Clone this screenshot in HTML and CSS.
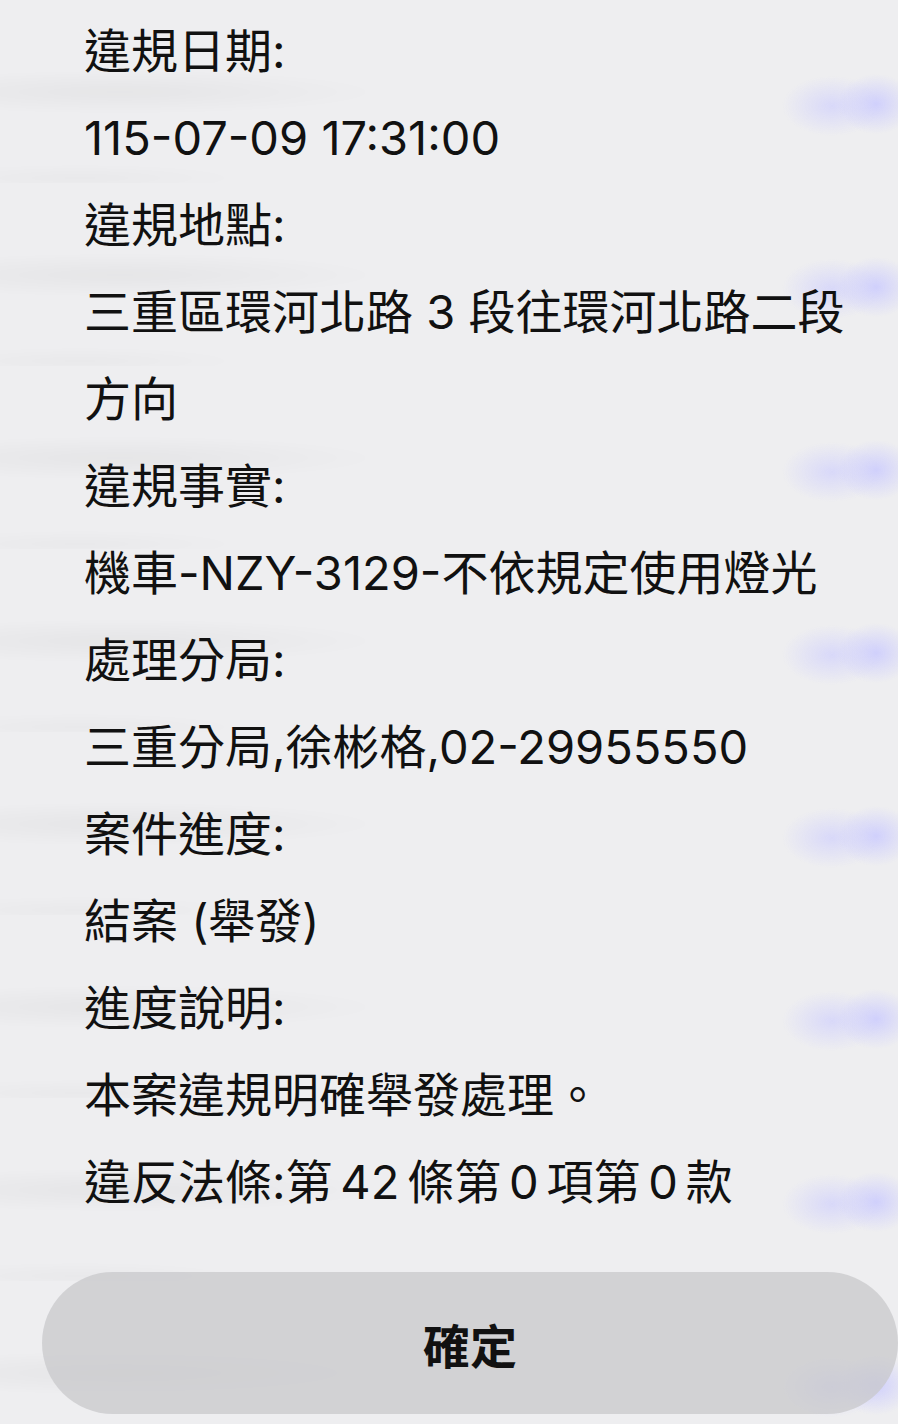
FILE: index.html
```html
<!DOCTYPE html>
<html lang="zh-Hant">
<head>
    <meta charset="UTF-8">
    <meta name="viewport" content="width=device-width, initial-scale=1.0">
    <title>違規查詢結果</title>

    <link rel="stylesheet" href="styles.css">
</head>
<body>
    <div class="alert" role="alertdialog" aria-label="違規查詢結果">
        <div class="message">
            <p>違規日期:</p>
            <p>115-07-09 17:31:00</p>
            <p>違規地點:</p>
            <p>三重區環河北路 3 段往環河北路二段方向</p>
            <p>違規事實:</p>
            <p>機車-NZY-3129-不依規定使用燈光</p>
            <p>處理分局:</p>
            <p>三重分局,徐彬格,02-29955550</p>
            <p>案件進度:</p>
            <p>結案 (舉發)</p>
            <p>進度說明:</p>
            <p>本案違規明確舉發處理。</p>
            <p>違反法條:第&#8198;42&#8198;條第&#8198;0&#8198;項第&#8198;0&#8198;款</p>
        </div>

        <div class="actions">
            <button class="btn-confirm" type="button">確定</button>
        </div>
    </div>
</body>
</html>
```

FILE: styles.css
```css
* {
    box-sizing: border-box;
    font-family: Inter, "Noto Sans CJK TC", sans-serif;
}

html, body {
    margin: 0;
    height: 100%;
    overflow: hidden;
}

body {
    background-color: #eeeef0;
    /* blurred list behind the sheet: lavender pills on the right, grey text on the left */
    background-image:
        radial-gradient(ellipse 38px 30px at 876px 104px, rgba(208, 208, 252, 1), rgba(208, 208, 252, 0)),
        radial-gradient(ellipse 50px 30px at 832px 106px, rgba(214, 214, 250, 0.9), rgba(214, 214, 250, 0)),
        radial-gradient(ellipse 260px 22px at 120px 92px, rgba(0, 0, 0, 0.035), rgba(0, 0, 0, 0)),
        radial-gradient(ellipse 160px 14px at 80px 178px, rgba(0, 0, 0, 0.02), rgba(0, 0, 0, 0));
    background-size: 100% 183px;
    background-repeat: repeat-y;
}

.alert {
    padding-top: 7px;
    color: #111;
}

.message {
    padding: 0 36px 0 84px;
}

.message p {
    margin: 0;
    font-size: 47px;
    line-height: 87px;
}

.actions {
    padding: 47px 0 0 42px;
}

.btn-confirm {
    display: block;
    width: 856px;
    height: 142px;
    border: none;
    border-radius: 71px;
    background: rgba(200, 200, 203, 0.75);
    color: #111;
    font-size: 47px;
    font-weight: 700;
    cursor: pointer;
}
```
